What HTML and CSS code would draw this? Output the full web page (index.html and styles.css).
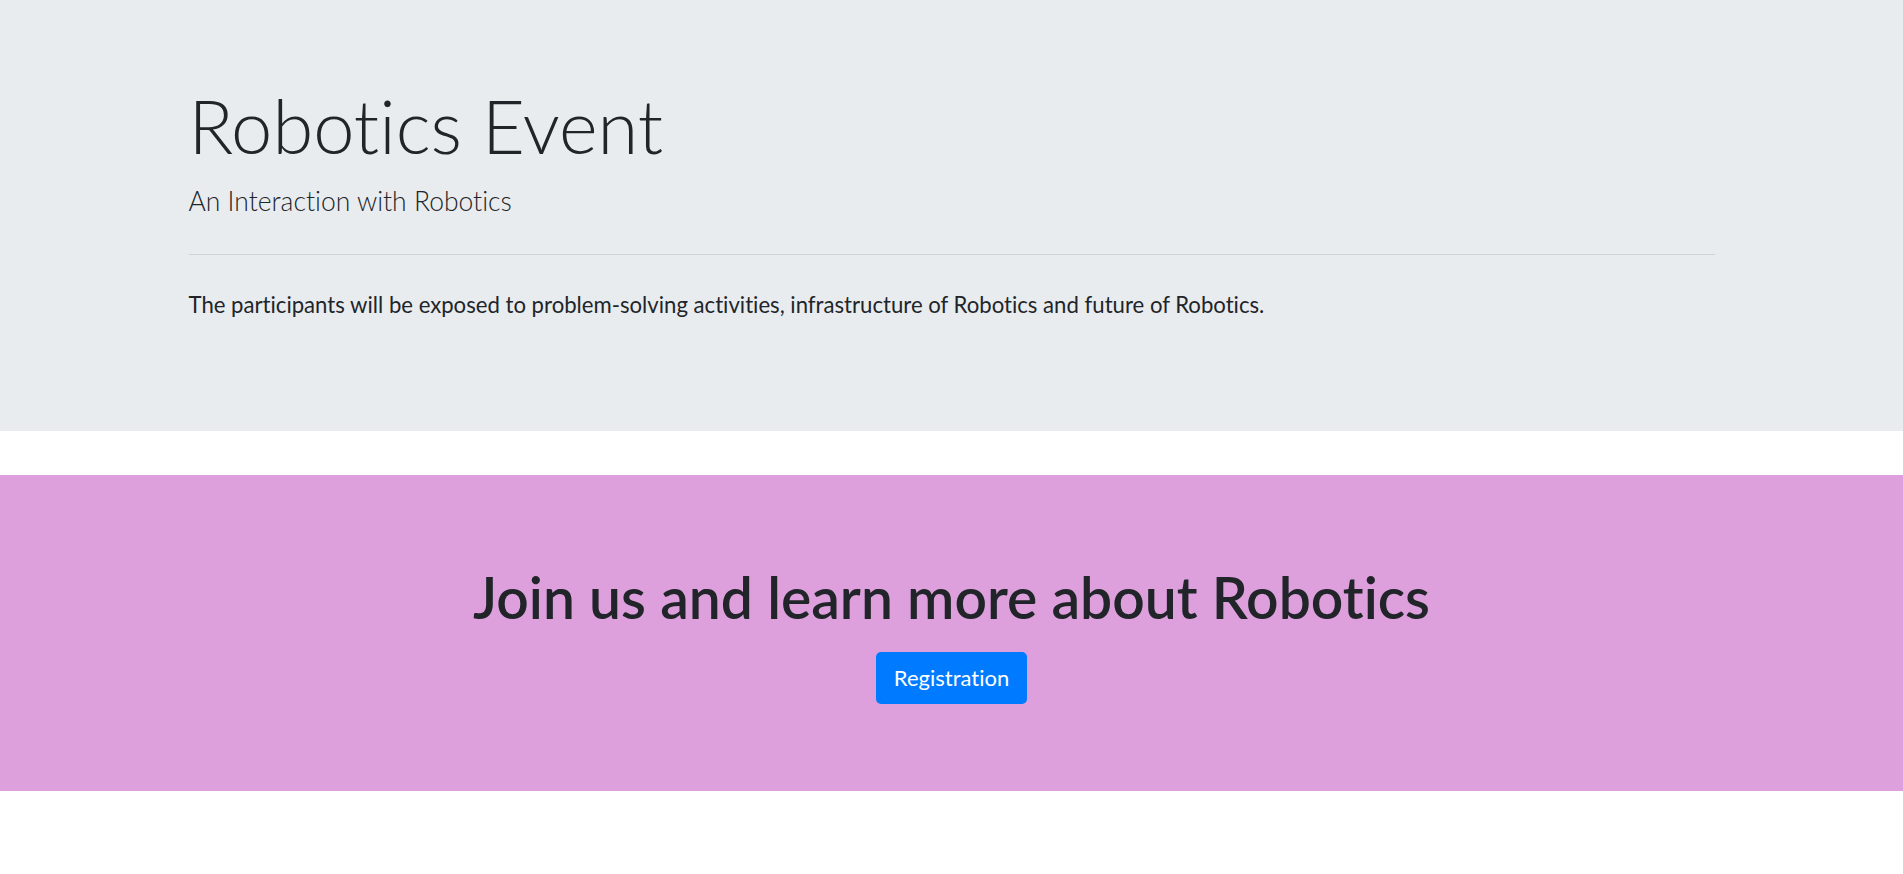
FILE: index.html
```html
<!DOCTYPE html>
<html lang="en">
<head>
<meta charset="utf-8">
<title>Robotics Event</title>
<link rel="stylesheet" href="styles.css">
</head>
<body>
  <header class="jumbotron">
    <div class="container">
      <h1 class="display-title">Robotics Event</h1>
      <p class="lead">An Interaction with Robotics</p>
      <hr class="divider">
      <p class="intro">The participants will be exposed to problem-solving activities, infrastructure of Robotics and future of Robotics.</p>
    </div>
  </header>
  <section class="cta">
    <h2 class="cta-title">Join us and learn more about Robotics</h2>
    <a class="btn-primary" href="#">Registration</a>
  </section>
</body>
</html>
```
FILE: styles.css
```css
* { box-sizing: border-box; }
html, body { margin: 0; padding: 0; }
body {
  font-family: Lato, "Open Sans", "Noto Sans", sans-serif;
  font-variant-ligatures: none;
  color: #212529;
  background: #ffffff;
  font-size: 22px;
  line-height: 1.5;
}
.jumbotron {
  background: #e9ecef;
  padding: 82px 0 110px;
  margin-bottom: 44px;
}
.container {
  max-width: 1526px;
  margin: 0 auto;
}
.display-title {
  margin: 0 0 11px;
  font-size: 74px;
  font-weight: 300;
  line-height: 1.2;
}
.lead {
  margin: 0;
  font-size: 26.5px;
  font-weight: 300;
  line-height: 1.5;
}
.divider {
  margin: 32px 0 0;
  border: 0;
  border-top: 1px solid rgba(0, 0, 0, 0.1);
  height: 0;
}
.intro {
  margin: 33px 0 0;
  font-size: 22.15px;
  line-height: 33px;
}
.cta {
  background: #dda0dd;
  padding: 88px 0 87px;
  display: flex;
  flex-direction: column;
  align-items: center;
}
.cta-title {
  margin: 0 0 21px;
  font-size: 57px;
  font-weight: 600;
  line-height: 1.2;
}
.btn-primary {
  display: inline-block;
  background: #007bff;
  color: #ffffff;
  text-decoration: none;
  font-size: 22px;
  line-height: 32px;
  padding: 10px 18px;
  border-radius: 5px;
}
```
